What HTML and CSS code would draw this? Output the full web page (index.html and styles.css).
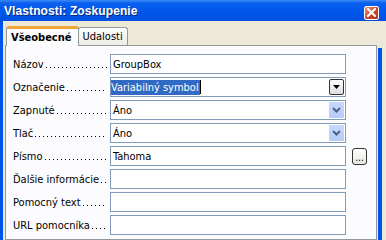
FILE: index.html
```html
<!doctype html>
<html lang="sk">
  <head>
    <meta charset="UTF-8" />
    <title>Vlastnosti: Zoskupenie</title>
    <link rel="stylesheet" href="styles.css">
  </head>
  <body>
    <div class="window">
      <div class="titlebar">
        <span class="title">Vlastnosti: Zoskupenie</span>
        <span class="close-btn">
          <svg width="9" height="9" viewBox="0 0 9 9"><path d="M1 1 L8 8 M8 1 L1 8" stroke="#fff" stroke-width="2" stroke-linecap="square"/></svg>
        </span>
      </div>

      <div class="body">
        <div class="tabs">
          <div class="tab active">Všeobecné</div>
          <div class="tab">Udalosti</div>
        </div>

        <div class="panel">
          <div class="row">
            <div class="label"><span>Názov</span><span class="leader"></span></div>
            <div class="field"><span class="value">GroupBox</span></div>
          </div>

          <div class="row">
            <div class="label"><span>Označenie</span><span class="leader"></span></div>
            <div class="field"><span class="value selected">Variabilný symbol</span><span class="caret"></span>
              <span class="drop-btn plain">
                <svg width="7" height="4" viewBox="0 0 7 4"><path d="M0 0 H7 L3.5 4 Z" fill="#000"/></svg>
              </span>
            </div>
          </div>

          <div class="row">
            <div class="label"><span>Zapnuté</span><span class="leader"></span></div>
            <div class="field"><span class="value">Áno</span>
              <span class="drop-btn xp">
                <svg width="9" height="6" viewBox="0 0 9 6"><path d="M1 1 L4.5 4.5 L8 1" fill="none" stroke="#4d6185" stroke-width="2"/></svg>
              </span>
            </div>
          </div>

          <div class="row">
            <div class="label"><span>Tlač</span><span class="leader"></span></div>
            <div class="field"><span class="value">Áno</span>
              <span class="drop-btn xp">
                <svg width="9" height="6" viewBox="0 0 9 6"><path d="M1 1 L4.5 4.5 L8 1" fill="none" stroke="#4d6185" stroke-width="2"/></svg>
              </span>
            </div>
          </div>

          <div class="row">
            <div class="label"><span>Písmo</span><span class="leader"></span></div>
            <div class="field"><span class="value">Tahoma</span></div>
            <span class="dots-btn">...</span>
          </div>

          <div class="row">
            <div class="label"><span>Ďalšie informácie</span><span class="leader"></span></div>
            <div class="field"></div>
          </div>

          <div class="row">
            <div class="label"><span>Pomocný text</span><span class="leader"></span></div>
            <div class="field"></div>
          </div>

          <div class="row">
            <div class="label"><span>URL pomocníka</span><span class="leader"></span></div>
            <div class="field"></div>
          </div>
        </div>
      </div>
    </div>
  </body>
</html>
```

FILE: styles.css
```css
:root {
  --xp-blue: #0055ea; --face: #ece9d8; --tab-border: #919b9c;
  --field-border: #7f9db9; --panel-bg: #fcfcfe;
}
html, body { margin: 0; padding: 0; width: 386px; height: 240px; overflow: hidden; background-color: var(--face); font-family: "DejaVu Sans Condensed", "Liberation Sans", sans-serif; font-size: 11px; color: #000; }
.window { display: flex; flex-direction: column; height: 240px; }
.titlebar { height: 21px; flex: none; display: flex; align-items: center; justify-content: space-between; padding: 0 7px 0 4px; background: linear-gradient(#3b8cf6 0, #0a5fee 3px, #0057ec 55%, #0050e0 100%); }
.title { color: #fff; font-family: "Liberation Sans", Arial, sans-serif; font-weight: bold; font-size: 12px; letter-spacing: 0.1px; text-shadow: 1px 1px #0a2a80; }
.close-btn { width: 13px; height: 12px; margin-top: 4px; border: 1px solid #fff; border-radius: 2px; background: linear-gradient(135deg, #e9957a, #c8432a 60%, #b63a20); display: flex; align-items: center; justify-content: center; }
.body { flex: 1; display: flex; flex-direction: column; border-left: 3px solid var(--xp-blue); padding: 4px 9px 0 2px; background: linear-gradient(var(--xp-blue), var(--xp-blue)) no-repeat right 4px top 27px / 4px 100%, var(--face); }
.tabs { display: flex; align-items: flex-end; height: 20px; margin-left: 1px; position: relative; z-index: 1; }
.tab { height: 17px; padding: 0 4px; border: 1px solid var(--tab-border); border-bottom: none; border-radius: 3px 3px 0 0; background: linear-gradient(#fefefe, #ecebe6); display: flex; align-items: center; }
.tab.active { height: 20px; font-weight: bold; background: var(--panel-bg); border-top: 3px solid #f0a53c; box-sizing: border-box; margin-bottom: -1px; padding: 0 6px 0 4px; }
.tab + .tab { margin-left: -1px; }
.panel { flex: 1; background: var(--panel-bg); border: 1px solid var(--tab-border); padding: 8px 0 0 7px; display: flex; flex-direction: column; gap: 3px; }
.row { display: flex; align-items: center; height: 20px; }
.label { width: 97px; flex: none; display: flex; align-items: stretch; white-space: nowrap; padding-right: 3px; box-sizing: border-box; }
.leader { flex: 1; margin-left: 2px; background: linear-gradient(to right, #000 1px, transparent 1px) repeat-x left bottom 3px / 4px 1px; }
.field { width: 234px; height: 18px; flex: none; border: 1px solid var(--field-border); background: #fff; display: flex; align-items: center; position: relative; }
.value { padding-left: 2px; }
.value.selected { background: #316ac5; color: #fff; padding: 1px 1px 1px 0; margin-left: 0; }
.caret { width: 1px; height: 14px; background: #000; }
.drop-btn { position: absolute; right: 1px; top: 1px; width: 15px; height: 16px; box-sizing: border-box; display: flex; align-items: center; justify-content: center; }
.drop-btn.plain { border: 1px solid #333; border-radius: 2px; background: linear-gradient(#fff, #d9dde3); }
.drop-btn.xp { background: linear-gradient(#c8d8fc, #b6cbf8); border-radius: 1px; }
.dots-btn { margin-left: 6px; width: 15px; height: 17px; box-sizing: border-box; border: 1px solid #333; border-radius: 3px; background: linear-gradient(#fff, #e6e6e0); font-size: 10px; display: flex; align-items: flex-end; justify-content: center; line-height: 12px; }
```
